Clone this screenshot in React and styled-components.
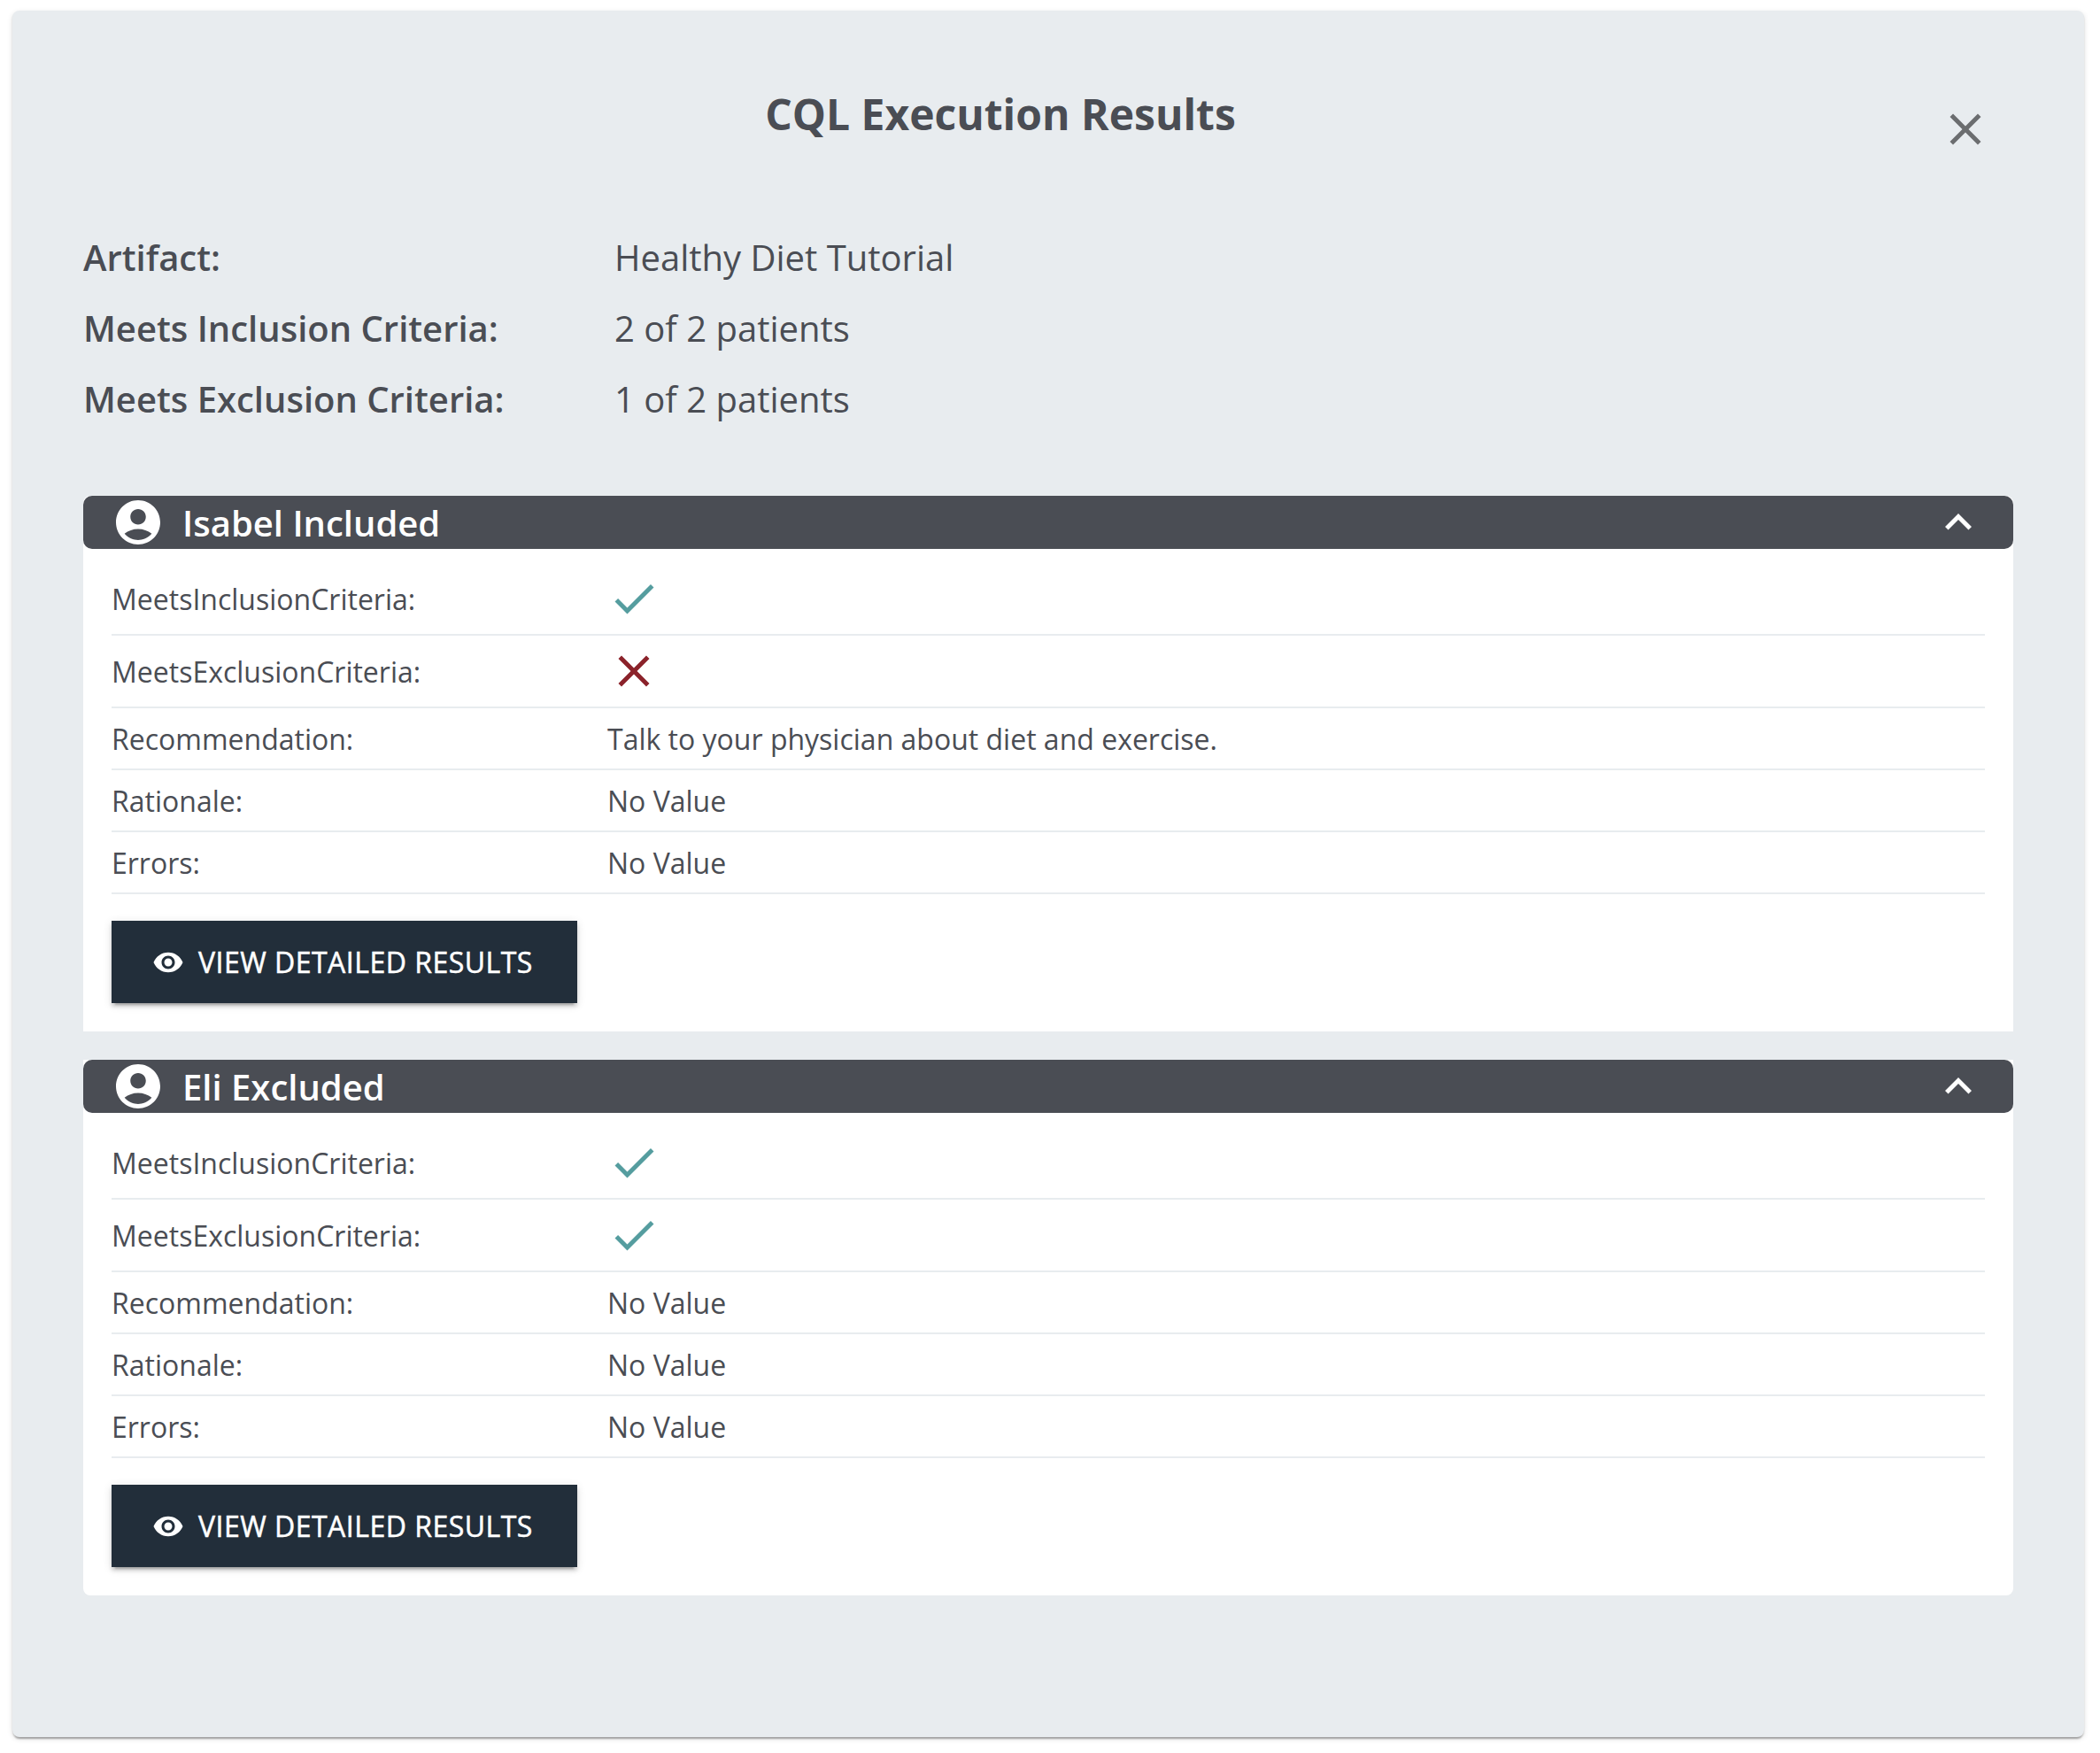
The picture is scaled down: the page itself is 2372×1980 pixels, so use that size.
import React from "react";
import styled, { createGlobalStyle } from "styled-components";

const GlobalStyle = createGlobalStyle`
  *, *::before, *::after { box-sizing: border-box; }
  body {
    margin: 0;
    background: #fff;
    color: #4a4d54;
    font-family: "Open Sans", "Noto Sans", sans-serif;
    font-size: 32px;
    line-height: 1.5;
  }
`;

const Page = styled.div`
  height: 1980px;
  padding: 12px 18px 18px 14px;
`;

const Dialog = styled.section`
  height: 1950px;
  padding: 80px 80px 0;
  border-radius: 8px;
  background: #e8ecef;
  box-shadow: 0 4px 2px -2px rgba(0, 0, 0, 0.2), 0 2px 2px 0 rgba(0, 0, 0, 0.14),
    0 2px 6px 0 rgba(0, 0, 0, 0.12);
`;

const TitleBar = styled.header`
  display: flex;
  align-items: flex-start;
  height: 164px;
`;

const Title = styled.h1`
  flex: 1;
  margin: 0;
  padding-top: 1px;
  text-align: center;
  font-size: 48px;
  font-weight: 700;
  line-height: 72px;
`;

const CloseButton = styled.button`
  display: flex;
  margin: 0;
  padding: 24px;
  border: 0;
  background: none;
  color: #6b6d6f;
`;

const Icon = styled.svg`
  display: block;
  flex: none;
  width: ${(p) => p.$size || 60}px;
  height: ${(p) => p.$size || 60}px;
  fill: ${(p) => p.$color || "currentColor"};
`;

const Summary = styled.dl`
  display: grid;
  grid-template-columns: 600px 1fr;
  grid-auto-rows: 80px;
  margin: 0 0 64px;
  font-size: 40px;
  line-height: 70px;
`;

const SummaryLabel = styled.dt`
  font-weight: 600;
`;

const SummaryValue = styled.dd`
  margin: 0;
`;

const PatientList = styled.div`
  display: flex;
  flex-direction: column;
  gap: 32px;
`;

const Patient = styled.article`
  background: #fff;
  &:first-child { border-radius: 8px 8px 0 0; }
  &:last-child { border-radius: 0 0 8px 8px; }
`;

const PatientHeader = styled.div`
  display: flex;
  align-items: center;
  height: 60px;
  padding: 0 32px;
  border-radius: 10px;
  background: #4a4d54;
  color: #fff;
`;

const PatientName = styled.h2`
  flex: 1;
  margin: 0 0 0 20px;
  font-size: 40px;
  font-weight: 600;
  line-height: 58px;
  padding-top: 2px;
`;

const PatientBody = styled.div`
  padding: 16px 32px 32px;
`;

const ResultRow = styled.div`
  display: flex;
  align-items: center;
  padding: 10px 0;
  border-bottom: 2px solid #e8ecef;
`;

const ResultText = styled.div`
  width: ${(p) => p.$width || "auto"};
  padding-top: 2px;
  line-height: 46px;
`;

const DetailsButton = styled.button`
  display: flex;
  align-items: center;
  gap: 16px;
  width: 526px;
  height: 93px;
  margin-top: 30px;
  padding: 0 46px;
  border: 0;
  background: #222e3a;
  color: #fff;
  font: inherit;
  letter-spacing: 0.48px;
  -webkit-text-stroke: 0.5px currentColor;
  white-space: nowrap;
  text-transform: uppercase;
  box-shadow: 0 6px 2px -4px rgba(0, 0, 0, 0.2), 0 4px 4px 0 rgba(0, 0, 0, 0.14),
    0 2px 10px 0 rgba(0, 0, 0, 0.12);
`;

const PATHS = {
  close:
    "M19 6.41L17.59 5 12 10.59 6.41 5 5 6.41 10.59 12 5 17.59 6.41 19 12 13.41 17.59 19 19 17.59 13.41 12z",
  check: "M9 16.17L4.83 12l-1.42 1.41L9 19 21 7l-1.41-1.41z",
  expandLess: "M12 8l-6 6 1.41 1.41L12 10.83l4.59 4.58L18 14z",
  account:
    "M12 2C6.48 2 2 6.48 2 12s4.48 10 10 10 10-4.48 10-10S17.52 2 12 2zm0 4c1.93 0 3.5 1.57 3.5 3.5S13.93 13 12 13s-3.5-1.57-3.5-3.5S10.07 6 12 6zm0 14c-2.03 0-4.43-.82-6.14-2.88C7.55 15.8 9.68 15 12 15s4.45.8 6.14 2.12C16.43 19.18 14.03 20 12 20z",
  eye: "M12 4.5C7 4.5 2.73 7.61 1 12c1.73 4.39 6 7.5 11 7.5s9.27-3.11 11-7.5c-1.73-4.39-6-7.5-11-7.5zM12 17c-2.76 0-5-2.24-5-5s2.24-5 5-5 5 2.24 5 5-2.24 5-5 5zm0-8c-1.66 0-3 1.34-3 3s1.34 3 3 3 3-1.34 3-3-1.34-3-3-3z",
};

function Glyph({ name, size, color }) {
  return (
    <Icon viewBox="0 0 24 24" $size={size} $color={color} aria-hidden="true">
      <path d={PATHS[name]} />
    </Icon>
  );
}

const SUMMARY = [
  ["Artifact:", "Healthy Diet Tutorial"],
  ["Meets Inclusion Criteria:", "2 of 2 patients"],
  ["Meets Exclusion Criteria:", "1 of 2 patients"],
];

const PATIENTS = [
  {
    name: "Isabel Included",
    results: [
      ["MeetsInclusionCriteria:", true],
      ["MeetsExclusionCriteria:", false],
      ["Recommendation:", "Talk to your physician about diet and exercise."],
      ["Rationale:", "No Value"],
      ["Errors:", "No Value"],
    ],
  },
  {
    name: "Eli Excluded",
    results: [
      ["MeetsInclusionCriteria:", true],
      ["MeetsExclusionCriteria:", true],
      ["Recommendation:", "No Value"],
      ["Rationale:", "No Value"],
      ["Errors:", "No Value"],
    ],
  },
];

function ResultValue({ value }) {
  if (value === true) return <Glyph name="check" color="#559d9f" />;
  if (value === false) return <Glyph name="close" color="#8b222a" />;
  return <ResultText>{value}</ResultText>;
}

export default function App() {
  return (
    <Page>
      <GlobalStyle />
      <Dialog>
        <TitleBar>
          <Title>CQL Execution Results</Title>
          <CloseButton aria-label="Close">
            <Glyph name="close" />
          </CloseButton>
        </TitleBar>
        <Summary>
          {SUMMARY.map(([label, value]) => (
            <React.Fragment key={label}>
              <SummaryLabel>{label}</SummaryLabel>
              <SummaryValue>{value}</SummaryValue>
            </React.Fragment>
          ))}
        </Summary>
        <PatientList>
          {PATIENTS.map((patient) => (
            <Patient key={patient.name}>
              <PatientHeader>
                <Glyph name="account" />
                <PatientName>{patient.name}</PatientName>
                <Glyph name="expandLess" />
              </PatientHeader>
              <PatientBody>
                {patient.results.map(([label, value]) => (
                  <ResultRow key={label}>
                    <ResultText $width="560px">{label}</ResultText>
                    <ResultValue value={value} />
                  </ResultRow>
                ))}
                <DetailsButton>
                  <Glyph name="eye" size={36} />
                  View Detailed Results
                </DetailsButton>
              </PatientBody>
            </Patient>
          ))}
        </PatientList>
      </Dialog>
    </Page>
  );
}
